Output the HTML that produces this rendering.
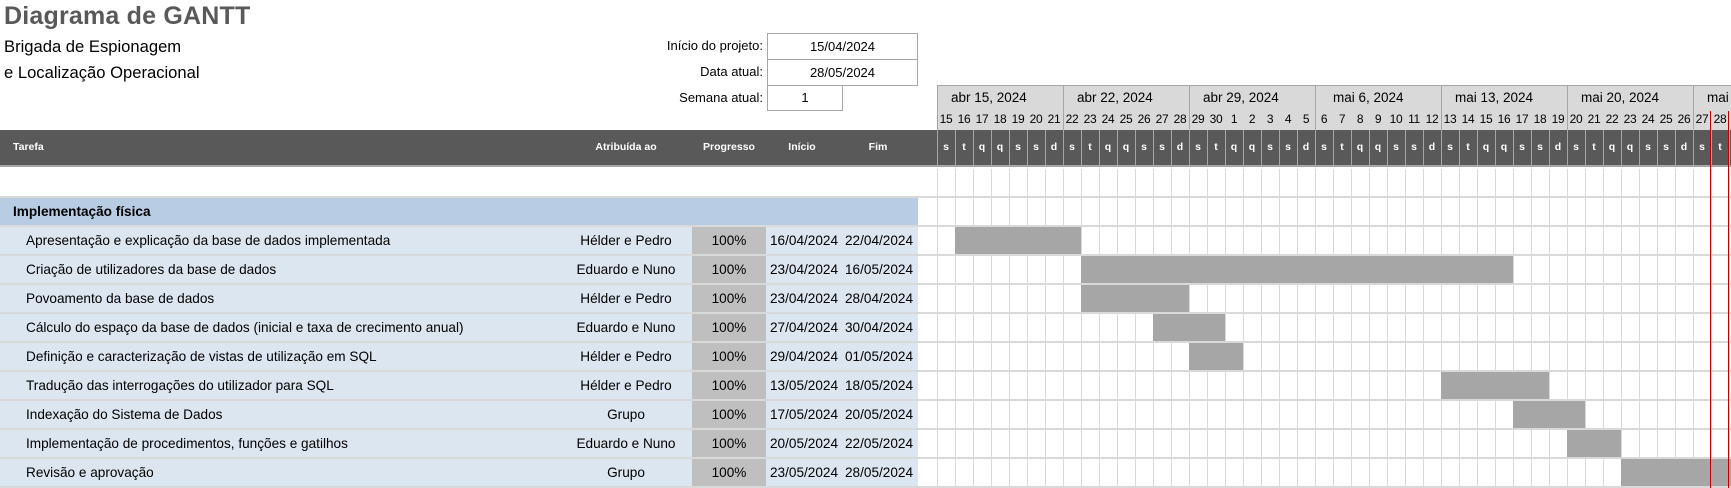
<!DOCTYPE html>
<html><head><meta charset="utf-8"><style>
*{margin:0;padding:0;box-sizing:border-box}
body{width:1731px;height:488px;overflow:hidden;background:#fff;position:relative;font-family:"Liberation Sans Narrow","Liberation Sans",sans-serif;color:#000}
.a{position:absolute;white-space:nowrap}
.t{font-size:13.6px;line-height:27px}
.c{text-align:center}
.gridbg{background:repeating-linear-gradient(to right,#d9d9d9 0 1px,#fff 1px 18px)}
.bar{position:absolute;background:#a6a6a6;height:27px}
.dl{display:flex;position:absolute;left:937px}
.dl div{width:18px;text-align:center;flex:none}
</style></head><body>
<div class="a" style="left:4px;top:2px;font-size:25px;font-weight:bold;color:#595959;letter-spacing:0.2px">Diagrama de GANTT</div>
<div class="a" style="left:4px;top:37px;font-size:16.6px">Brigada de Espionagem</div>
<div class="a" style="left:4px;top:63px;font-size:16.6px">e Localização Operacional</div>

<div class="a" style="right:968px;top:33px;font-size:13px;line-height:26px">Início do projeto:</div>
<div class="a" style="right:968px;top:59px;font-size:13px;line-height:26px">Data atual:</div>
<div class="a" style="right:968px;top:85px;font-size:13px;line-height:26px">Semana atual:</div>
<div class="a c" style="left:767px;top:33px;width:151px;height:27px;border:1px solid #a6a6a6;font-size:13px;line-height:25px">15/04/2024</div>
<div class="a c" style="left:767px;top:59px;width:151px;height:27px;border:1px solid #a6a6a6;font-size:13px;line-height:25px">28/05/2024</div>
<div class="a c" style="left:767px;top:85px;width:76px;height:26px;border:1px solid #a6a6a6;border-top:none;font-size:13px;line-height:25px">1</div>

<div class="a" style="left:937px;top:85px;width:794px;height:45px;background:#d9d9d9;border-top:1px solid #a6a6a6"></div>
<div class="a" style="left:937px;top:85px;width:794px;height:45px;background:repeating-linear-gradient(to right,#a6a6a6 0 1px,transparent 1px 126px)"></div>
<div class="a" style="left:951px;top:90px;font-size:13.5px">abr 15, 2024</div>
<div class="a" style="left:1077px;top:90px;font-size:13.5px">abr 22, 2024</div>
<div class="a" style="left:1203px;top:90px;font-size:13.5px">abr 29, 2024</div>
<div class="a" style="left:1333px;top:90px;font-size:13.5px">mai 6, 2024</div>
<div class="a" style="left:1455px;top:90px;font-size:13.5px">mai 13, 2024</div>
<div class="a" style="left:1581px;top:90px;font-size:13.5px">mai 20, 2024</div>
<div class="a" style="left:1707px;top:90px;font-size:13.5px">mai 2</div>
<div class="dl" style="top:112px;font-size:12px;letter-spacing:-0.3px"><div>15</div><div>16</div><div>17</div><div>18</div><div>19</div><div>20</div><div>21</div><div>22</div><div>23</div><div>24</div><div>25</div><div>26</div><div>27</div><div>28</div><div>29</div><div>30</div><div>1</div><div>2</div><div>3</div><div>4</div><div>5</div><div>6</div><div>7</div><div>8</div><div>9</div><div>10</div><div>11</div><div>12</div><div>13</div><div>14</div><div>15</div><div>16</div><div>17</div><div>18</div><div>19</div><div>20</div><div>21</div><div>22</div><div>23</div><div>24</div><div>25</div><div>26</div><div>27</div><div>28</div></div>

<div class="a" style="left:0;top:130px;width:1731px;height:37px;background:#595959;border-bottom:2px solid #a6a6a6"></div>
<div class="a" style="left:937px;top:130px;width:794px;height:35px;background:repeating-linear-gradient(to right,#a6a6a6 0 1px,transparent 1px 18px)"></div>
<div class="a" style="left:13px;top:130px;line-height:35px;color:#fff;font-weight:bold;font-size:10.5px">Tarefa</div>
<div class="a c" style="left:580px;width:92px;top:130px;line-height:35px;color:#fff;font-weight:bold;font-size:10.5px">Atribuída ao</div>
<div class="a c" style="left:692px;width:74px;top:130px;line-height:35px;color:#fff;font-weight:bold;font-size:10.5px">Progresso</div>
<div class="a c" style="left:766px;width:72px;top:130px;line-height:35px;color:#fff;font-weight:bold;font-size:10.5px">Início</div>
<div class="a c" style="left:842px;width:72px;top:130px;line-height:35px;color:#fff;font-weight:bold;font-size:10.5px">Fim</div>
<div class="dl" style="top:130px;line-height:35px;color:#fff;font-weight:bold;font-size:10.5px"><div>s</div><div>t</div><div>q</div><div>q</div><div>s</div><div>s</div><div>d</div><div>s</div><div>t</div><div>q</div><div>q</div><div>s</div><div>s</div><div>d</div><div>s</div><div>t</div><div>q</div><div>q</div><div>s</div><div>s</div><div>d</div><div>s</div><div>t</div><div>q</div><div>q</div><div>s</div><div>s</div><div>d</div><div>s</div><div>t</div><div>q</div><div>q</div><div>s</div><div>s</div><div>d</div><div>s</div><div>t</div><div>q</div><div>q</div><div>s</div><div>s</div><div>d</div><div>s</div><div>t</div></div>

<div class="a" style="left:0;top:169px;width:1731px;height:319px;background:#d9d9d9"></div>
<div class="a" style="left:0;top:169px;width:937px;height:27px;background:#fff"></div>
<div class="a gridbg" style="left:937px;top:169px;width:794px;height:27px"></div>
<div class="a" style="left:0;top:198px;width:918px;height:27px;background:#b8cce4"></div>
<div class="a" style="left:918px;top:198px;width:19px;height:27px;background:#fff"></div>
<div class="a gridbg" style="left:937px;top:198px;width:794px;height:27px"></div>
<div class="a t" style="left:13px;top:198px;font-weight:bold">Implementação física</div>

<div class="a" style="left:0;top:227px;width:918px;height:27px;background:#dce6f1"></div><div class="a" style="left:918px;top:227px;width:19px;height:27px;background:#fff"></div><div class="a gridbg" style="left:937px;top:227px;width:794px;height:27px"></div>
<div class="a" style="left:0;top:256px;width:918px;height:27px;background:#dce6f1"></div><div class="a" style="left:918px;top:256px;width:19px;height:27px;background:#fff"></div><div class="a gridbg" style="left:937px;top:256px;width:794px;height:27px"></div>
<div class="a" style="left:0;top:285px;width:918px;height:27px;background:#dce6f1"></div><div class="a" style="left:918px;top:285px;width:19px;height:27px;background:#fff"></div><div class="a gridbg" style="left:937px;top:285px;width:794px;height:27px"></div>
<div class="a" style="left:0;top:314px;width:918px;height:27px;background:#dce6f1"></div><div class="a" style="left:918px;top:314px;width:19px;height:27px;background:#fff"></div><div class="a gridbg" style="left:937px;top:314px;width:794px;height:27px"></div>
<div class="a" style="left:0;top:343px;width:918px;height:27px;background:#dce6f1"></div><div class="a" style="left:918px;top:343px;width:19px;height:27px;background:#fff"></div><div class="a gridbg" style="left:937px;top:343px;width:794px;height:27px"></div>
<div class="a" style="left:0;top:372px;width:918px;height:27px;background:#dce6f1"></div><div class="a" style="left:918px;top:372px;width:19px;height:27px;background:#fff"></div><div class="a gridbg" style="left:937px;top:372px;width:794px;height:27px"></div>
<div class="a" style="left:0;top:401px;width:918px;height:27px;background:#dce6f1"></div><div class="a" style="left:918px;top:401px;width:19px;height:27px;background:#fff"></div><div class="a gridbg" style="left:937px;top:401px;width:794px;height:27px"></div>
<div class="a" style="left:0;top:430px;width:918px;height:27px;background:#dce6f1"></div><div class="a" style="left:918px;top:430px;width:19px;height:27px;background:#fff"></div><div class="a gridbg" style="left:937px;top:430px;width:794px;height:27px"></div>
<div class="a" style="left:0;top:459px;width:918px;height:27px;background:#dce6f1"></div><div class="a" style="left:918px;top:459px;width:19px;height:27px;background:#fff"></div><div class="a gridbg" style="left:937px;top:459px;width:794px;height:27px"></div>

<div class="a" style="left:692px;top:227px;width:74px;height:27px;background:#bfbfbf"></div>
<div class="a" style="left:692px;top:256px;width:74px;height:27px;background:#bfbfbf"></div>
<div class="a" style="left:692px;top:285px;width:74px;height:27px;background:#bfbfbf"></div>
<div class="a" style="left:692px;top:314px;width:74px;height:27px;background:#bfbfbf"></div>
<div class="a" style="left:692px;top:343px;width:74px;height:27px;background:#bfbfbf"></div>
<div class="a" style="left:692px;top:372px;width:74px;height:27px;background:#bfbfbf"></div>
<div class="a" style="left:692px;top:401px;width:74px;height:27px;background:#bfbfbf"></div>
<div class="a" style="left:692px;top:430px;width:74px;height:27px;background:#bfbfbf"></div>
<div class="a" style="left:692px;top:459px;width:74px;height:27px;background:#bfbfbf"></div>

<div class="a t" style="left:26px;top:227px">Apresentação e explicação da base de dados implementada</div>
<div class="a t" style="left:26px;top:256px">Criação de utilizadores da base de dados</div>
<div class="a t" style="left:26px;top:285px">Povoamento da base de dados</div>
<div class="a t" style="left:26px;top:314px">Cálculo do espaço da base de dados (inicial e taxa de crecimento anual)</div>
<div class="a t" style="left:26px;top:343px">Definição e caracterização de vistas de utilização em SQL</div>
<div class="a t" style="left:26px;top:372px">Tradução das interrogações do utilizador para SQL</div>
<div class="a t" style="left:26px;top:401px">Indexação do Sistema de Dados</div>
<div class="a t" style="left:26px;top:430px">Implementação de procedimentos, funções e gatilhos</div>
<div class="a t" style="left:26px;top:459px">Revisão e aprovação</div>

<div class="a t c" style="left:570px;width:112px;top:227px">Hélder e Pedro</div>
<div class="a t c" style="left:570px;width:112px;top:256px">Eduardo e Nuno</div>
<div class="a t c" style="left:570px;width:112px;top:285px">Hélder e Pedro</div>
<div class="a t c" style="left:570px;width:112px;top:314px">Eduardo e Nuno</div>
<div class="a t c" style="left:570px;width:112px;top:343px">Hélder e Pedro</div>
<div class="a t c" style="left:570px;width:112px;top:372px">Hélder e Pedro</div>
<div class="a t c" style="left:570px;width:112px;top:401px">Grupo</div>
<div class="a t c" style="left:570px;width:112px;top:430px">Eduardo e Nuno</div>
<div class="a t c" style="left:570px;width:112px;top:459px">Grupo</div>

<div class="a t c" style="left:692px;width:74px;top:227px">100%</div>
<div class="a t c" style="left:692px;width:74px;top:256px">100%</div>
<div class="a t c" style="left:692px;width:74px;top:285px">100%</div>
<div class="a t c" style="left:692px;width:74px;top:314px">100%</div>
<div class="a t c" style="left:692px;width:74px;top:343px">100%</div>
<div class="a t c" style="left:692px;width:74px;top:372px">100%</div>
<div class="a t c" style="left:692px;width:74px;top:401px">100%</div>
<div class="a t c" style="left:692px;width:74px;top:430px">100%</div>
<div class="a t c" style="left:692px;width:74px;top:459px">100%</div>

<div class="a t" style="left:770px;top:227px">16/04/2024</div><div class="a t" style="left:845px;top:227px">22/04/2024</div>
<div class="a t" style="left:770px;top:256px">23/04/2024</div><div class="a t" style="left:845px;top:256px">16/05/2024</div>
<div class="a t" style="left:770px;top:285px">23/04/2024</div><div class="a t" style="left:845px;top:285px">28/04/2024</div>
<div class="a t" style="left:770px;top:314px">27/04/2024</div><div class="a t" style="left:845px;top:314px">30/04/2024</div>
<div class="a t" style="left:770px;top:343px">29/04/2024</div><div class="a t" style="left:845px;top:343px">01/05/2024</div>
<div class="a t" style="left:770px;top:372px">13/05/2024</div><div class="a t" style="left:845px;top:372px">18/05/2024</div>
<div class="a t" style="left:770px;top:401px">17/05/2024</div><div class="a t" style="left:845px;top:401px">20/05/2024</div>
<div class="a t" style="left:770px;top:430px">20/05/2024</div><div class="a t" style="left:845px;top:430px">22/05/2024</div>
<div class="a t" style="left:770px;top:459px">23/05/2024</div><div class="a t" style="left:845px;top:459px">28/05/2024</div>

<div class="bar" style="left:955px;top:227px;width:126px"></div>
<div class="bar" style="left:1081px;top:256px;width:432px"></div>
<div class="bar" style="left:1081px;top:285px;width:108px"></div>
<div class="bar" style="left:1153px;top:314px;width:72px"></div>
<div class="bar" style="left:1189px;top:343px;width:54px"></div>
<div class="bar" style="left:1441px;top:372px;width:108px"></div>
<div class="bar" style="left:1513px;top:401px;width:72px"></div>
<div class="bar" style="left:1567px;top:430px;width:54px"></div>
<div class="bar" style="left:1621px;top:459px;width:110px"></div>

<div class="a" style="left:1710px;top:111px;width:1px;height:377px;background:#c00000"></div>
<div class="a" style="left:1728px;top:111px;width:1px;height:377px;background:#c00000"></div>
</body></html>
